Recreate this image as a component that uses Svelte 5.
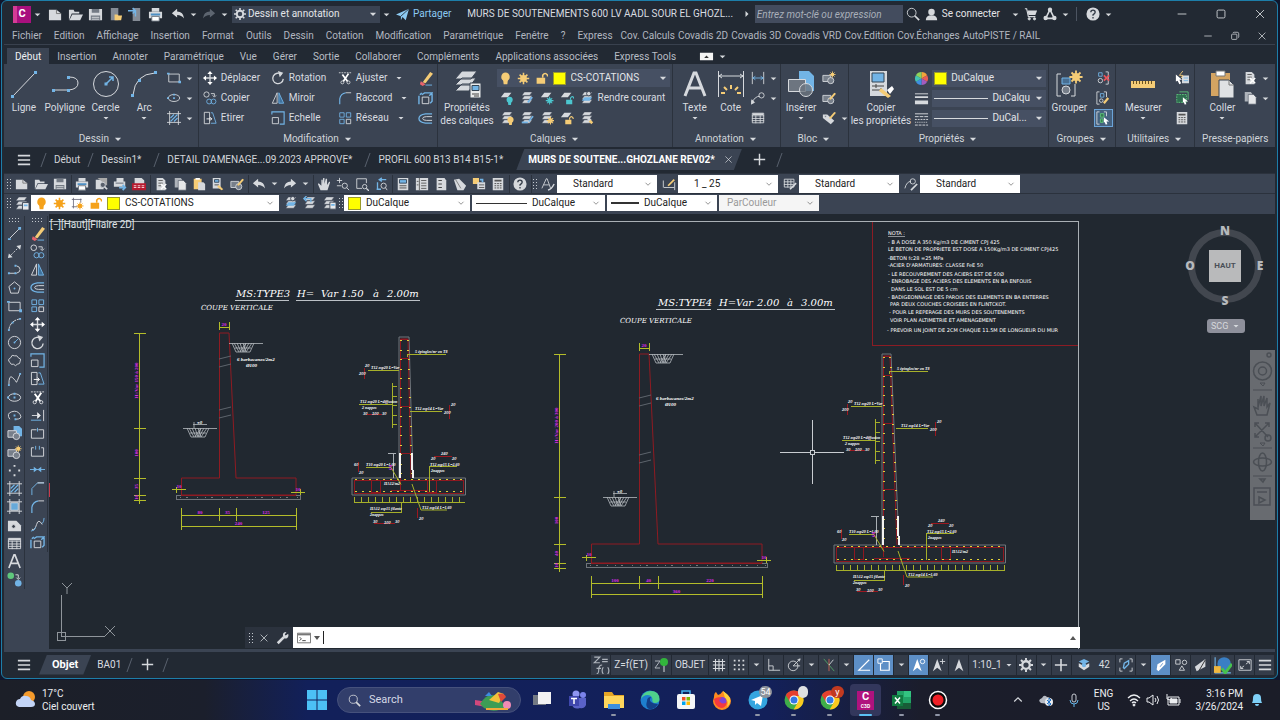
<script lang="ts">
  type Tool = [icon: string, label: string];
  type Point = [number, number];

  const W = "#d6d9dd";
  const B = "#72b4e6";
  const Y = "#f5cc76";
  const G = "#5fc77c";

  const sheets = `<path d="M5 1h9l-3 4H2zM5 5.500h9l-3 4H2z" fill="${W}" stroke="#3b4453" stroke-width=".6"/><path d="M5 10h9l-3 4H2z" fill="${W}" stroke="#3b4453" stroke-width=".6"/>`;
  const sheet = `<path d="M5 2h8l-4 5H1z" fill="${W}" stroke="none"/>`;
  const doc = `<path d="M3 1h7l3 3v11H3z" fill="${W}" stroke="none"/>`;
  const block = `<path d="M1 5h9v7H1z" fill="#777f8a"/><circle cx="10" cy="11" r="3.500" fill="#777f8a"/>`;
  const bulb = (x: number, y: number, c: string, k = 1) =>
    `<g transform="translate(${x} ${y}) scale(${k})" stroke="none"><circle r="3.500" fill="${c}"/><path d="M-2 2h4l-.5 4h-3z" fill="${c}"/></g>`;
  const sun = (x: number, y: number, r: number, c: string) =>
    `<g transform="translate(${x} ${y}) scale(${r})"><path d="M0-2.200V2.200M-2.200 0H2.200M-1.500-1.500l3 3M1.500-1.500l-3 3" stroke="${c}" stroke-width=".6"/><circle r="1.300" fill="${c}" stroke="none"/></g>`;
  const lock = (x: number, y: number, c: string, k = 1) =>
    `<g transform="translate(${x} ${y}) scale(${k})"><path d="M0 4h7v5H0z" fill="${c}" stroke="none"/><path d="M5 4V2q2-3 4 0v1" stroke="${c}" stroke-width="1.300"/></g>`;

  const icons: Record<string, string> = {
    caret: `<path d="M3 6h10l-5 5z" fill="${W}" stroke="none"/>`,
    chevron: `<path d="M4 6l4 4 4-4" stroke="#555"/>`,
    newFile: `<path d="M1 3h8l5 4v7H1z" fill="${W}" stroke="none"/><path d="M9 3v4h5" stroke="#777"/>`,
    open: `<path d="M1 14V3h5l1 2h5v2H4z" fill="${W}" stroke="none"/><path d="M4.500 8H16l-3 6H1.500z" fill="${W}" stroke="none"/>`,
    save: `<path d="M1 2h14v12H1z" fill="${W}" stroke="none"/><path d="M4 2h8v4H4zM3 9h10v5H3z" fill="#737a84" stroke="none"/><path d="M4 11h8M4 13h8" stroke="${W}"/>`,
    phoneOpen: `<path d="M3 1h8v13H3z" fill="#858c96" stroke="none"/><path d="M7 14V8h3l1 1h4l-1 5z" fill="${Y}" stroke="none"/>`,
    phoneSave: `<path d="M5 1h8v14H5z" fill="#858c96" stroke="none"/><path d="M0 4h7M5 1l3 3-3 3M8 4v6" stroke="${B}" stroke-width="1.500"/>`,
    print: `<path d="M4 1h8v4H4z" fill="${W}" stroke="none"/><path d="M1 5h14v7H1z" fill="${W}" stroke="none"/><path d="M3 8h10" stroke="#4d8fc4" stroke-width="2"/><path d="M4 10h8v5H4z" fill="#fff" stroke="#69717c"/>`,
    preview: `<path d="M2 3h9v11H2z" fill="${W}" stroke="none"/><path d="M4 1h11v9" fill="#aaa" stroke="none"/><circle cx="10" cy="9" r="3" fill="#59606c"/><path d="M12 11l3 3" stroke-width="2"/>`,
    publish: `<path d="M4 1h8v4H4zM1 5h13v6H1z" fill="${W}" stroke="none"/><path d="M3 7h9" stroke="#59606c"/><path d="M7 12h6M11 9l3 3-3 3" stroke="${B}" stroke-width="2"/>`,
    dwf: `<path d="M3 1h8l3 3v4H3z" fill="${W}" stroke="none"/><path d="M0 7h16v8H0z" fill="#b5192f" stroke="none"/><path d="M2 10h12M2 12h12" stroke="#f3c9cf" stroke-width="1.200" stroke-dasharray="3 1.500"/>`,
    undo: `<path d="M1 7l6-5v3q7 0 8 8-3-4-8-4v3z" fill="${W}" stroke="none"/>`,
    redo: `<path d="M15 7L9 2v3q-7 0-8 8 3-4 8-4v3z" fill="${W}" stroke="none"/>`,
    redoOff: `<path d="M15 7L9 2v3q-7 0-8 8 3-4 8-4v3z" fill="#5d6570" stroke="none"/>`,
    gear: `<circle cx="8" cy="8" r="4.300" stroke-width="2.600"/><path d="M8 0v3M8 13v3M0 8h3M13 8h3M2.300 2.300l2 2M11.700 11.700l2 2M13.700 2.300l-2 2M4.300 11.700l-2 2" stroke-width="2.200"/>`,
    plane: `<path d="M0 8L16 1l-4 14-4-4-2 4v-5z" fill="#8ccaf2" stroke="none"/><path d="M6 10l10-9" stroke="#222933"/>`,
    play: `<path d="M5 2l6 6-6 6z" fill="${W}" stroke="none"/>`,
    search: `<circle cx="6.500" cy="6.500" r="5"/><path d="M10 10l5 5" stroke-width="2"/>`,
    user: `<circle cx="8" cy="5" r="4" fill="${W}" stroke="none"/><path d="M1 15q0-6 7-6t7 6z" fill="${W}" stroke="none"/>`,
    cart: `<path d="M1 2h2l2 9h8" stroke-width="1.300"/><path d="M4 4h11l-2 5H5z" fill="${W}" stroke="none"/><circle cx="6" cy="13.500" r="1.300" fill="${W}"/><circle cx="12" cy="13.500" r="1.300" fill="${W}"/>`,
    apps: `<path d="M8 3L3 13h10z" stroke-width="1.800"/><circle cx="8" cy="3" r="2.500" fill="${W}" stroke="none"/><circle cx="3" cy="12.500" r="2.500" fill="${W}" stroke="none"/><circle cx="13" cy="12.500" r="2.500" fill="${W}" stroke="none"/>`,
    help: `<circle cx="8" cy="8" r="7.500" fill="${W}" stroke="none"/><path d="M5.500 6q0-2.500 2.500-2.500T10.500 6q0 1-2.500 3v1M8 11.500v1.500" stroke="#333b47" stroke-width="1.500"/>`,
    min: `<path d="M3 8h10"/>`,
    max: `<rect x="3.500" y="3.500" width="9" height="9" rx="1.500"/>`,
    restore: `<rect x="3.500" y="5.500" width="7" height="7" rx="1"/><path d="M5.500 4q0-1 1.500-1h4q2 0 2 2v4q0 1-1 1"/>`,
    close: `<path d="M3.500 3.500l9 9M12.500 3.500l-9 9"/>`,
    plus: `<path d="M8 1v14M1 8h14" stroke-width="1.800"/>`,
    menu: `<path d="M1 3h14M1 8h14M1 13h14" stroke-width="1.800"/>`,
    ribbonToggle: `<path d="M1 4h14v8H1z" fill="#f4f4f4" stroke="none"/><path d="M5.500 9.500h5L8 7z" fill="#333" stroke="none"/>`,
    line: `<path d="M3 13L13 3"/><path d="M1 13h3v2H1zM12 1h3v3h-3z" fill="${B}" stroke="none"/>`,
    ray: `<path d="M2 14L14 2" stroke-dasharray="2 1.500"/><path d="M1 15l1-5 4 4zM15 1l-1 5-4-4z" fill="${W}" stroke="none"/>`,
    pline: `<path d="M2 12h8q4-1 4-4t-4-4"/><path d="M1 11h2v2H1zM8 11h2v2H8zM8 3h2v2H8z" fill="${B}" stroke="none"/>`,
    polygon: `<path d="M8 2l6 5-2 7H4L2 7z"/><circle cx="8" cy="9" r="1" fill="${B}" stroke="none"/>`,
    rect: `<path d="M2 3.500h12v9H2z"/><path d="M0 2h3v2H0zM13 11h3v3h-3z" fill="${B}" stroke="none"/>`,
    arc: `<path d="M2 14Q3 4 14 2" stroke-dasharray="4 1"/><path d="M1 13h2v2H1zM5 5h2v2H5zM13 1h2v2h-2z" fill="${B}" stroke="none"/>`,
    circle: `<circle cx="8" cy="8" r="6.500"/><path d="M8 8l4-4" stroke="${B}"/><circle cx="8" cy="8" r="1" fill="${B}" stroke="none"/>`,
    cloud: `<path d="M3 10q-3-3 1-5 1-4 4-2 3-1 4 2 4 1 2 4 0 3-3 3-2 3-4 0-3 1-4-2z"/>`,
    spline: `<path d="M2 14Q2 2 6 6t4 5 4-9" /><path d="M1 13h2v2H1zM13 1h2v2h-2z" fill="${B}" stroke="none"/>`,
    ellipse: `<ellipse cx="8" cy="8" rx="6.500" ry="4"/><path d="M7 7h2v2H7zM0 7h2v2H0zM7 3h2v2H7z" fill="${B}" stroke="none"/>`,
    ellipseArc: `<path d="M3 12q-4-6 2-8t9 3-5 5"/><path d="M7 7h2v2H7zM8 11h2v2H8z" fill="${B}" stroke="none"/>`,
    insert: `<path d="M7 0h6l3 3v8H7z" fill="${B}" stroke="none"/>${block}`,
    block: `${block}${sun(12, 4, 1.6, Y)}`,
    blockEdit: `${block}<path d="M8 9l6-7 2 1-6 7z" fill="${Y}" stroke="none"/>`,
    tag: `<path d="M1 4h5l8 7-4 4-9-7z" fill="${W}" stroke="none"/><path d="M8 8l6-7 2 1-6 7z" fill="${Y}" stroke="none"/><circle cx="4" cy="6" r="1" fill="#3b4453"/>`,
    points: `<path d="M7 2h2v2H7zM2 7h2v2H2zM12 7h2v2h-2zM7 12h2v2H7z" fill="${W}" stroke="none"/>`,
    hatch: `<path d="M3 0v16M13 0v16M0 3h16M0 13h16"/><path d="M4 8l4-4M4 12l8-8M8 12l4-4" stroke="${B}" stroke-width="1.300"/>`,
    gradient: `<path d="M4 4h8v8H4z" fill="#67a9d9"/><path d="M3 0v16M13 0v16M0 3h16M0 13h16"/>`,
    region: `<path d="M1 3h9l5 5v6H1z" fill="${W}" stroke="none"/><circle cx="7" cy="9" r="2" fill="#333b47"/>`,
    table: `<path d="M1.500 2.500h13v11h-13zM1 5.500h14M1 8.500h14M1 11h14M5.500 5v9M10.500 5v9"/><path d="M2 3.500h12" stroke-width="2"/>`,
    text: `<path d="M2 15L7.500 1h1L14 15M4 10h8" stroke-width="1.800"/>`,
    pointStyle: `<circle cx="4" cy="4" r="3.500" fill="${G}" stroke="none"/><circle cx="12" cy="12" r="3.500" fill="${B}" stroke="none"/><path d="M9 3h3v4M10 6l2 2 2-2"/>`,
    erase: `<path d="M5 12L13 1l3 2-8 10z" fill="${Y}" stroke="none"/><path d="M3 11l5 3-3 2-3-2z" fill="#e8636c" stroke="none"/><path d="M8 15h7" stroke="${B}"/>`,
    copy: `<circle cx="4" cy="4" r="3"/><path d="M9 3h4v3M11 5l2 2 2-2"/><circle cx="7" cy="12" r="2.800" stroke="${B}"/><circle cx="12" cy="12" r="2.800" stroke="${B}"/>`,
    mirror: `<path d="M7 2v12H1.500z" /><path d="M9 2v12h5.500z" fill="#3f719c" stroke="${B}"/>`,
    offset: `<path d="M15 3H8Q1 4 1 8t7 5h7" stroke="${B}" stroke-width="1.400"/><path d="M15 6H9Q5 6 5 8t4 2h6"/>`,
    array: `<path d="M2 2h5v5H2zM9.500 2h5v5h-5zM2 9.500h5v5H2z" stroke="${B}"/><path d="M9.500 9.500h5v5h-5z"/>`,
    move: `<path d="M8 1v14M1 8h14"  stroke-width="1.500"/><path d="M8 0l3 3.500H5zM8 16l3-3.500H5zM0 8l3.500-3v6zM16 8l-3.500-3v6z" fill="#fff" stroke="none"/>`,
    rotate: `<path d="M12 4A6 6 0 1 0 14 9" stroke-width="1.500"/><path d="M8 0l6 2-4 5z" fill="${W}" stroke="none"/>`,
    scale: `<path d="M1 4V1h14v14h-5" stroke="${B}" stroke-width="1.300"/><path d="M1.500 7.500h7v7h-7z"/>`,
    stretch: `<path d="M1.500 1.500h6v13h-6z"/><path d="M9 2h2l4 12H9" stroke="${B}"/><path d="M4 9h6M8 7l2 2-2 2" stroke="#fff"/>`,
    trim: `<path d="M1 2h14" stroke-dasharray="2 1"/><path d="M5 4l6 8M12 3L6 12" stroke="#fff" stroke-width="2"/><circle cx="5" cy="13" r="1.700"/><circle cx="12" cy="13" r="1.700"/>`,
    extend: `<path d="M14.500 2v12"/><path d="M1 13h11" stroke="${B}"/><path d="M2 8h8M8 5l3 3-3 3z" fill="#fff"/>`,
    breakPt: `<path d="M7 4H1.500v9h13V4H9"/><path d="M8 2v4" stroke="${B}"/>`,
    breakGap: `<path d="M4 4H1.500v9h13V4H12"/><path d="M6 2v4M10 2v4" stroke="${B}"/>`,
    join: `<path d="M0 8h16" stroke="${B}"/><path d="M4 5l4 3-4 3zM12 5L8 8l4 3z" fill="${B}" stroke="none"/>`,
    chamfer: `<path d="M2 15V8l6-6h7" stroke="${B}"/><path d="M8 2h7"/>`,
    fillet: `<path d="M2 15V9Q3 3 9 2" stroke="${B}" stroke-width="1.300"/><path d="M9 2h6"/>`,
    blend: `<path d="M2 13q3 2 5-5 2-7 6 0" stroke="${W}"/><path d="M1 15q4 0 5-4M13 7q2-2 2-6" stroke="${B}"/>`,
    explode: `<path d="M4.500 6.500h7v7h-7z"/><path d="M1 5v9M4 4l3-2h8l-3 3M15 3v8l-2 2M2 4l2-2" stroke="${B}" stroke-width="1.500"/>`,
    layers: `${sheets}<path d="M9 7h7v8H9z" fill="#e8eaec" stroke="#3b4453"/><path d="M10.500 9h4v2h-4z" fill="${B}" stroke="none"/>`,
    bulb: bulb(8, 6, Y, 1.5),
    bulbOn: bulb(8, 6, "#f5a21b", 1.5),
    sun: sun(8, 8, 3.2, Y),
    sunOn: sun(8, 8, 3.2, "#f5a21b"),
    vpSun: `<path d="M1 3h12M3 1v13M1 12h7M12 2v5" stroke="#667"/>${sun(11, 11, 2, "#f5a21b")}`,
    unlock: lock(2, 1, Y, 1.5),
    unlockOn: lock(2, 1, "#f5a21b", 1.5),
    layOff: `${sheet}${bulb(11, 10, "#4cc6cf")}`,
    layIso: `${sheets}<path d="M14 7l-5 6" stroke="${B}" stroke-width="2"/>`,
    layFreeze: `${sheet}${sun(11, 11, 2, "#4cc6cf")}`,
    layLock: `${sheet}${lock(7, 6, "#4cc6cf")}`,
    layCur: `${sheets}<path d="M5 7h9l-3 4H2z" fill="${B}" stroke="none"/><circle cx="10" cy="3" r="2.500" fill="${W}" stroke="#3b4453"/>`,
    layOn: `${sheets}${bulb(12, 10, Y)}`,
    layUniso: `${sheets}<path d="M15 6l-5 6M2 13h7" stroke="${B}" stroke-width="1.800"/>`,
    layThaw: `${sheets}${sun(12, 11, 2, Y)}`,
    layUnlock: `${sheet}${lock(6, 6, Y)}`,
    layMatch: `${sheets}<path d="M9 8l3 3" stroke="${W}" stroke-width="3"/><path d="M11 11l3 3" stroke="${Y}" stroke-width="3"/>`,
    layPrev: `${sheets}<path d="M1 3h8v4M4 0L1 3l3 3" stroke="${B}" stroke-width="1.500"/>`,
    dimLin: `<path d="M1.500 1v14M14.500 1v14"/><path d="M2 8h12M5 6L2 8l3 2M11 6l3 2-3 2" stroke="${B}"/>`,
    leader: `<path d="M1 14q3-8 9-8"/><circle cx="12" cy="5" r="3"/><path d="M0 15l1-5 3 3z" fill="${W}"/>`,
    cut: `${doc}<path d="M5 4h5M5 7h5M5 10h3" stroke="#555"/><path d="M8 8l6 6M14 8l-6 6" stroke="#fff" stroke-width="1.500"/>`,
    copyClip: `<path d="M2 1h7l2 3v8H2z" fill="#aeb3ba" stroke="none"/><path d="M6 4h6l3 3v8H6z" fill="#e4e6e8" stroke="#3b4453" stroke-width=".6"/>`,
    paste: `<path d="M2 2h9v12H2z" fill="${Y}" stroke="none"/><path d="M4 1h5v2H4z" fill="#fff" stroke="none"/><path d="M7 6h6l2 2v7H7z" fill="${W}" stroke="none"/>`,
    match: `<path d="M2 1h9v12H2z" fill="${W}" stroke="none"/><path d="M4 3h5v3H4z" fill="${B}" stroke="#345"/><path d="M4 9h5" stroke="#444"/><path d="M9 9l5 5-2 1-5-4z" fill="${Y}" stroke="none"/>`,
    pan: `<path d="M4 15L1 8l1-1 3 3V3h1.500v5L7 1h1.500v7L10 2h1.500v7L14 5l1 1-3 9z" fill="${W}" stroke="none"/>`,
    zoomRt: `<path d="M4 1v6M1 4h6M1 10h5"/><circle cx="10" cy="10" r="3"/><path d="M12 12l3 3"/>`,
    zoomWin: `<path d="M13 7V2H2v11h6"/><circle cx="11" cy="11" r="2.500"/><path d="M13 13l3 3" stroke-width="1.500"/>`,
    zoomPrev: `<path d="M6 3h8M4 6v8M3 14h5M9 1L6 3l3 2" stroke="${B}" stroke-width="1.500"/><circle cx="11" cy="10" r="3"/><path d="M13 12l2 3"/>`,
    props: `<path d="M2 1h12v14H2z" fill="${W}" stroke="none"/><path d="M4 3h8v4H4z" fill="${B}" stroke="#345"/><path d="M4 10h8M4 12.500h8" stroke="#444"/>`,
    palette: `<path d="M1 1h14v14H1z" fill="${W}" stroke="none"/><path d="M5 1v14M7 4h6M7 7h6M7 10h6M7 13h6M2 5h2M2 9h2" stroke="#555"/>`,
    toolPal: `<path d="M3 1h9l2 3v11H3z" fill="${W}" stroke="none"/><path d="M5 4h4M5 8h4M5 12h4" stroke="#333"/>`,
    sheetSet: `<path d="M1 3l6-1 8 8-3 5H5z" fill="${W}" stroke="none"/><path d="M3 3l6 10" stroke="#777"/>`,
    markup: `<path d="M1 1h7v7H1z" fill="${Y}" stroke="none"/><path d="M6 6h9v8H6z" fill="${W}" stroke="none"/><path d="M9 3h3v3" stroke="${B}" stroke-width="2"/><path d="M8 9h6M8 12h6" stroke="#555"/>`,
    calc: `<path d="M2 1h12v14H2z" fill="${W}" stroke="none"/><path d="M4 3h8v2H4z" fill="#555" stroke="none"/><path d="M4 7.500h8M4 10h8M4 12.500h8" stroke="#444" stroke-dasharray="2 1"/>`,
    textStyle: `<path d="M1 13L6 2h1l4 11M3 9h6"/><path d="M8 15q4-1 7-7" stroke-width="1.700"/>`,
    dimStyle: `<path d="M1.500 4v8M14.500 6v9M2 12h12"/><path d="M7 10l7-7" stroke="${Y}" stroke-width="2"/>`,
    tableStyle: `<path d="M1.500 2.500h11v9h-11zM1 5.500h11M1 8.500h11M5.500 3v9M9 3v9"/><path d="M8 14l7-7" stroke-width="2"/>`,
    leaderStyle: `<path d="M1 13Q3 5 8 5"/><circle cx="10" cy="5" r="3"/><path d="M8 15l7-7" stroke-width="2"/>`,
    lweight: `<path d="M1 3h14" stroke-width="1"/><path d="M1 6.500h14" stroke-width="2"/><path d="M1 12h14" stroke-width="4"/>`,
    ltype: `<path d="M1 3h14"/><path d="M1 6h14" stroke-dasharray="4 1"/><path d="M1 9h14" stroke-dasharray="2 1"/><path d="M1 12h14" stroke-dasharray="1 1"/><path d="M1 15h14" stroke-dasharray="3 1"/>`,
    wheel: `<g stroke="none"><path d="M8 8V1a7 7 0 0 1 6 3.500z" fill="#f3a33a"/><path d="M8 8l6-3.500a7 7 0 0 1 0 7z" fill="#e85c56"/><path d="M8 8l6 3.500A7 7 0 0 1 8 15z" fill="#a45cc0"/><path d="M8 8v7a7 7 0 0 1-6-3.500z" fill="#3e8fe0"/><path d="M8 8l-6 3.500a7 7 0 0 1 0-7z" fill="#45c4b2"/><path d="M8 8L2 4.500A7 7 0 0 1 8 1z" fill="#8fd35a"/></g>`,
    ungroup: `<path d="M3 2h4v4H3z" stroke="${B}"/><circle cx="5" cy="11" r="2.500"/><path d="M11 1h3v14h-3"/><path d="M9 5l6 6M15 5l-6 6" stroke="#e8545c" stroke-width="2"/>`,
    groupEdit: `<path d="M4 1H1v14h3M9 1h3v6"/><path d="M5 3h4v4H5z" stroke="${B}"/><circle cx="6" cy="11" r="2"/><path d="M9 14l5-6" stroke="${Y}" stroke-width="2.500"/>`,
    groupSel: `<path d="M4 1H1v14h3M9 1h3v5"/><path d="M5 3h4v4H5zM5 9h3v4H5z" stroke="${G}" fill="#357a52"/><path d="M9 7l6 5h-3l1 3-2 .5-1-3-1 1z" fill="#fff" stroke="none"/>`,
    quickSel: `<path d="M8 5h8v9H8z" fill="${W}" stroke="none"/><path d="M10 8h5M10 11h5" stroke="${B}"/><path d="M1 4l7 6H5l2 4-2 1-2-4-2 1z" fill="#fff" stroke="none"/><path d="M9 0L5 5h4L7 8" stroke="${Y}"/>`,
    selAll: `<path d="M2 4h11v9H2z" fill="#2f6e50" stroke="${G}" stroke-dasharray="2 1"/><path d="M5 1h10v9" stroke="${G}"/><path d="M9 7l6 5h-3l1 3-2 .5-1-3-1 1z" fill="#fff" stroke="none"/>`,
    grid: `<path d="M4 1v14M8 1v14M12 1v14M1 4h14M1 8h14M1 12h14" stroke-width="1.200"/>`,
    dots: `<path d="M2 3h12M2 8h12M2 13h12" stroke-width="2" stroke-dasharray="2 3"/>`,
    ortho: `<path d="M2 1v13h13M2 9h5v5"/>`,
    polar: `<circle cx="7" cy="9" r="5.500"/><path d="M7 9l8-8M7 9h8M12 2l3-1-1 3"/>`,
    iso: `<path d="M2 1l12 14" stroke="#55a868"/><path d="M8 1v14" stroke="#c65"/><path d="M13 2L8 8"/>`,
    angle: `<path d="M14 2L2 14h13" stroke="#fff" stroke-width="1.300"/>`,
    osnap: `<path d="M4 4h10v10H4z" stroke="#fff" stroke-width="1.300"/><path d="M1 1h5v5H1z" fill="#5d8fc6" stroke="#fff"/>`,
    annoVis: `<path d="M6 1l5 14-5-4-5 4z" fill="#fff" stroke="none"/><circle cx="12" cy="4" r="2.500" stroke="#fff"/>`,
    annoAuto: `<path d="M6 1l5 14-5-4-5 4z" fill="${W}" stroke="none"/><path d="M12 1v6M9 4h6"/>`,
    anno: `<path d="M8 1l5 14-5-4-5 4z" fill="${W}" stroke="none"/>`,
    stack: `<path d="M8 1l6 3-6 3-6-3z" fill="${B}" stroke="none"/><path d="M2 6v4l6 4 6-4V6L8 9z" fill="${W}" stroke="none"/><circle cx="8" cy="8" r="2.500" fill="${B}" stroke="none"/>`,
    frameTag: `<path d="M4 1H1v4M12 1h3v4M4 15H1v-4M12 15h3v-4"/><path d="M5 11l1-5 5-3v4l-5 5z" stroke="${B}" stroke-width="1.500"/>`,
    tagBlue: `<path d="M3 13l1-6 9-5v5l-8 8z" fill="#fff" stroke="none"/><path d="M7 10l3-4" stroke="#5d8fc6"/>`,
    shapes: `<path d="M2 2h5v5H2zM6 14l3-5 3 5z"/><circle cx="12" cy="5" r="2.500"/>`,
    zf: `<path d="M2 1h5L2 6h5M9 3h5M9 5h5M4 16q2 0 2-4t3-4M4 11h4M10 10q-2 3 0 6M14 10q2 3 0 6" stroke="#aeb4bc"/>`,
    zPin: `<path d="M2 4h5L2 11h5" stroke="#aeb4bc"/><path d="M11 7v8"/><circle cx="11" cy="5" r="4" fill="#32b53c" stroke="none"/>`,
    gfx: `<path d="M3 15L1 10 13 1v9z" fill="${W}" stroke="none"/><path d="M6 14l7-12" stroke="#222"/>`,
    cloudOk: `<circle cx="9" cy="7" r="6" fill="#3a7fc4" stroke="none"/><path d="M1 1v14h14" stroke="${B}"/><path d="M0 9h6v6H0z" fill="#efb73e" stroke="none"/><path d="M7 11l3 4 6-8" stroke="#47c24f" stroke-width="2.500"/>`,
    full: `<path d="M1 2h14v12H1z"/><path d="M9 7l4-3M10 4h3v3M7 9l-4 3M6 12H3V9"/>`,
    wrench: `<path d="M2 14l7-7" stroke-width="3"/><path d="M14 3l-3 2-1-1 2-3q-5 0-4 5 1 4 5 2 2-2 1-5z" fill="${W}" stroke="none"/>`,
    prompt: `<path d="M.5 2.500h15v11H.5z" fill="#fff" stroke="#666"/><path d="M1 4h14" stroke="#777" stroke-width="2"/><path d="M3 7l2 2-2 2M6 11h4" stroke="#333"/>`,
    up: `<path d="M3 10l5-5 5 5" stroke-width="1.600"/>`,
  };

  // 28 x 28 icons of the large ribbon buttons
  const bigIcons: Record<string, string> = {
    line: `<path d="M3 26L25 3"/><path d="M1 25h3v3H1zM24 1h3v3h-3z" fill="${B}" stroke="none"/>`,
    pline: `<path d="M2 20h16q9-1 9-7t-9-6"/><path d="M1 19h3v3H1zM16 19h3v3h-3zM16 6h3v3h-3z" fill="${B}" stroke="none"/>`,
    circle: `<circle cx="14" cy="14" r="12.500"/><path d="M14 14l7-7M17 7h4v4" stroke="${B}" stroke-width="1.500"/><path d="M12.500 12.500h3v3h-3z" fill="${B}" stroke="none"/>`,
    arc: `<path d="M3 25Q5 4 25 3"/><path d="M1 24h3v3H1zM8 9h3v3H8zM24 1h3v3h-3z" fill="${B}" stroke="none"/>`,
    layers: `<path d="M9 1h15l-6 8H2zM9 8h14l-5 7H2zM9 14h12l-5 7H2z" fill="${W}" stroke="#3b4453"/><path d="M17 13h11v15H17z" fill="#e8eaec" stroke="#3b4453"/><path d="M19 15.500h7v5h-7z" fill="${B}" stroke="#345"/><path d="M19 24h7M21 26h5" stroke="#444"/>`,
    text: `<path d="M4 26L13 3h2l9 23M7 18h14" stroke-width="3"/>`,
    dim: `<path d="M1.500 1v26M26.500 1v26M2 6h24M5 4L2 6l3 2M23 4l3 2-3 2"/><path d="M14 15v4M7 17l3 3M21 17l-3 3M4 23h4M20 23h4" stroke="${Y}" stroke-width="2"/>`,
    insert: `<path d="M12 1h10l5 5v15H12z" fill="${B}" stroke="none"/><path d="M1.500 9.500h17v12h-17z" fill="#6d7580"/><circle cx="19" cy="20" r="6.500" fill="#6d7580" fill-opacity=".8"/>`,
    match: `<path d="M3 1h17v25H3z" fill="${W}" stroke="none"/><path d="M5 3h12v9H5z" fill="${B}" stroke="#345" /><path d="M5 16h12M5 20h9M9 14v4M14 18v4" stroke="#444"/><path d="M14 18l10 8-3 2-9-7z" fill="${Y}" stroke="none"/><path d="M20 20l5-4 2 3-4 5z" fill="#fff" stroke="none"/>`,
    group: `<path d="M6 4H2v22h4M16 26h4V14" /><path d="M7 8h8v6H7z" fill="#486f93" stroke="${B}"/><circle cx="11" cy="20" r="4" fill="#777f8a"/>${sun(21, 7, 3, Y)}`,
    measure: `<path d="M2 11h24v7H2z" fill="${Y}" stroke="none"/><path d="M4.500 11v3M7.500 11v3M10.500 11v3M13.500 11v3M16.500 11v3M19.500 11v3M22.500 11v3" stroke="#6b5320"/>`,
    paste: `<path d="M3 3h19v23H3z" fill="#d4a462" stroke="none"/><path d="M8 1h9v5H8z" fill="#fff" stroke="#777"/><path d="M11 10h10l5 5v13H11z" fill="#dfe1e4" stroke="#3b4453"/><path d="M21 10v5h5" stroke="#777"/>`,
  };

  const quickAccess: Tool[] = [
    ["newFile", "Nouveau"], ["open", "Ouvrir"], ["save", "Enregistrer"],
    ["phoneOpen", "Ouvrir depuis mobile"], ["phoneSave", "Enregistrer sur mobile"], ["print", "Tracer"],
  ];
  const menus = ["Fichier", "Edition", "Affichage", "Insertion", "Format", "Outils", "Dessin", "Cotation", "Modification", "Paramétrique", "Fenêtre", "?", "Express"];
  const covadisMenus = ["Cov. Calculs", "Covadis 2D", "Covadis 3D", "Covadis VRD", "Cov.Edition", "Cov.Échanges", "AutoPISTE / RAIL"];
  const ribbonTabs = ["Début", "Insertion", "Annoter", "Paramétrique", "Vue", "Gérer", "Sortie", "Collaborer", "Compléments", "Applications associées", "Express Tools"];

  const modify: [string, string, boolean][] = [
    ["move", "Déplacer", false], ["rotate", "Rotation", false], ["trim", "Ajuster", true],
    ["copy", "Copier", false], ["mirror", "Miroir", false], ["fillet", "Raccord", true],
    ["stretch", "Etirer", false], ["scale", "Echelle", false], ["array", "Réseau", true],
  ];
  const modifyExtra: Tool[] = [["erase", "Effacer"], ["explode", "Décomposer"], ["offset", "Décaler"]];
  const layerTools: Tool[] = [
    ["layOff", "Inactif"], ["layIso", "Isoler"], ["layFreeze", "Geler"], ["layLock", "Verrouiller"],
  ];
  const layerTools2: Tool[] = [
    ["layOn", "Activer tout"], ["layUniso", "Désisoler"], ["layThaw", "Libérer tout"], ["layUnlock", "Déverrouiller"], ["layMatch", "Faire correspondre"],
  ];

  const standardBar: Tool[][] = [
    [["newFile", "Nouveau"], ["open", "Ouvrir"], ["save", "Enregistrer"]],
    [["print", "Tracer"], ["preview", "Aperçu"], ["publish", "Publier"], ["dwf", "DWF"]],
    [["cut", "Couper"], ["copyClip", "Copier"], ["paste", "Coller"], ["match", "Copier les propriétés"], ["blockEdit", "Editeur de blocs"]],
  ];
  const standardBar2: Tool[][] = [
    [["pan", "Panoramique"], ["zoomRt", "Zoom"], ["zoomWin", "Zoom fenêtre"], ["zoomPrev", "Zoom précédent"]],
    [["props", "Propriétés"], ["palette", "DesignCenter"], ["toolPal", "Palettes d'outils"], ["sheetSet", "Jeu de feuilles"], ["markup", "Annotations"], ["calc", "Calculatrice"]],
    [["help", "Aide"]],
  ];
  const styleSelects: [string, string, string][] = [
    ["textStyle", "Style de texte", "Standard"], ["dimStyle", "Style de cote", "1 _ 25"],
    ["tableStyle", "Style de tableau", "Standard"], ["leaderStyle", "Style de ligne de repère", "Standard"],
  ];

  const drawTools = ["line", "ray", "pline", "polygon", "rect", "arc", "circle", "cloud", "spline", "ellipse", "ellipseArc", "insert", "block", "points", "hatch", "gradient", "region", "table", "text", "pointStyle"];
  const editTools = ["erase", "copy", "mirror", "offset", "array", "move", "rotate", "scale", "stretch", "trim", "extend", "breakPt", "breakGap", "join", "chamfer", "fillet", "blend", "explode"];

  const notes: [number, number, string][] = [
    [888, 244, "- B A DOSE A 350 Kg/m3 DE CIMENT CPJ 425"],
    [888, 251, "LE BETON DE PROPRIETE EST DOSE A 150Kg/m3 DE CIMENT CPJ425"],
    [888, 260, "-BETON fc28 =25 MPa"],
    [888, 267, "-ACIER D'ARMATURES: CLASSE FeE 50"],
    [888, 276, "- LE RECOUVREMENT DES ACIERS EST DE 50Ø"],
    [888, 283, "- ENROBAGE DES ACIERS DES ELEMENTS EN BA ENFOUIS"],
    [891, 291, "DANS LE SOL EST DE 5 cm"],
    [888, 299, "- BADIGEONNAGE DES PAROIS DES ELEMENTS EN BA ENTERRES"],
    [890, 306, "PAR  DEUX COUCHES CROISEES  EN FLINTCKOT."],
    [889, 314, "- POUR LE REPERAGE DES MURS DES SOUTENEMENTS"],
    [890, 322, "VOIR PLAN ALTIMETRIE ET AMENAGEMENT"],
    [887, 332, "- PREVOIR UN JOINT DE 2CM CHAQUE 11.5M DE LONGUEUR DU MUR"],
  ];

  // formwork sections of the two wall types
  const walls = [
    {
      left: 219, right: 229, heel: 236, top: 333, foot: 478, base: 495, x0: 181, x1: 296,
      dimX: 139, levels: [333, 428, 478, 495, 500], heights: ["H=Var 150 à 200", "100", "35", "10"],
      spans: [181, 219, 236, 296], widths: ["80", "35", "125"], total: "240", dimY: 515,
      earth: 343, water: 428, note: [237, 361] as Point, drains: [359, 367, 410, 418], blind: [176, 300],
    },
    {
      left: 639, right: 649, heel: 658, top: 354, foot: 544, base: 563, x0: 591, x1: 762,
      dimX: 559, levels: [354, 497, 544, 563, 568], heights: ["H=Var 200 à 300", "100", "40", "10"],
      spans: [591, 639, 658, 762], widths: ["100", "40", "220"], total: "360", dimY: 583,
      earth: 354, water: 497, note: [656, 400] as Point, drains: [398, 406, 455, 463], blind: [586, 767],
    },
  ];

  // reinforcement sections
  const rebars = [
    { l: 399, r: 409, heel: 413, top: 337, foot: 478, base: 495, x0: 352, x1: 465, lap: 453, rungs: [339, 358, 406, 453], comb: 383, stirrups: [371, 427], inner: [384, 485] as Point, front: 370, back: 411, up: 429 },
    { l: 882, r: 891, heel: 899, top: 354, foot: 545, base: 563, x0: 834, x1: 1005, lap: 516, rungs: [356, 375, 423, 489], comb: 419, stirrups: [854, 941], inner: [952, 553] as Point, front: 406, back: 428, up: 926 },
  ];

  function steps(from: number, to: number, step: number) {
    const out: number[] = [];
    for (let v = from; v <= to; v += step) out.push(v);
    return out;
  }

  const hatchEarth = (x: number, y: number) =>
    `M${x} ${y}l4 9h14l4-9M${x + 2} ${y}l5 9M${x + 5} ${y}l4 9M${x + 8} ${y}l3 9 3-9M${x + 11} ${y}l3 9M${x + 20} ${y}l-6 9M${x + 17} ${y}l-5 9M${x + 14} ${y}l-6 9M${x + 3} ${y + 5}h16`;

  const status: [string, string, boolean][] = [
    ["grid", "Grille", false], ["dots", "Résolution", false], ["caret", "Options de résolution", false],
    ["ortho", "Ortho", false], ["polar", "Repérage polaire", false], ["caret", "Options polaires", false],
    ["iso", "Isométrique", false], ["caret", "Options isométriques", false],
    ["angle", "Repérage d'accrochage", true], ["osnap", "Accrochage aux objets", true], ["caret", "Options d'accrochage", false],
    ["annoVis", "Visibilité des annotations", true], ["annoAuto", "Echelle automatique", false], ["anno", "Echelle d'annotation", false],
  ];

  let activeTab = $state("Début");
  let command = $state("");
</script>

{#snippet icon(name: string, size = 14)}
  <svg class="icon" width={size} height={size} viewBox="0 0 16 16" fill="none" stroke={W} aria-hidden="true">{@html icons[name]}</svg>
{/snippet}

{#snippet tool(name: string, label: string, size = 14)}
  <button type="button" class={["tool", name === "caret" && "narrow"]} aria-label={label}>{@render icon(name, name === "caret" ? 9 : size)}</button>
{/snippet}

{#snippet big(name: string, label: string, caret = false, second = "")}
  <button type="button" class="big">
    <svg width="28" height="28" viewBox="0 0 28 28" fill="none" stroke={W} aria-hidden="true">{@html bigIcons[name]}</svg>
    <span>{label}</span>
    {#if second}<span>{second}</span>{/if}
    {#if caret}{@render icon("caret", 8)}{/if}
  </button>
{/snippet}

{#snippet combo(label: string, value: string, kind = "light")}
  <select class={["combo", kind]} aria-label={label} disabled={kind === "light" && value === "ParCouleur"}>
    <option>{value}</option>
  </select>
  {@render icon(kind === "light" ? "chevron" : "caret", 10)}
{/snippet}

{#snippet label(x: number, y: number, text: string, large = false)}
  <text class={["anno", large && "large"]} {x} {y}>{text}</text>
{/snippet}

<div class="desktop">
  <div class="window">
    <header class="titlebar">
      <button type="button" class="logo" aria-label="Menu de l'application">C</button>
      {@render tool("caret", "Menu")}
      <div class="quick">
        {#each quickAccess as [name, text]}{@render tool(name, text, 15)}{/each}
      </div>
      {@render tool("undo", "Annuler")}
      {@render tool("caret", "Historique")}
      {@render tool("redoOff", "Rétablir")}
      {@render tool("caret", "Historique de rétablissement")}
      <div class="field workspace">{@render icon("gear", 12)}{@render combo("Espace de travail", "Dessin et annotation", "dark")}</div>
      {@render tool("caret", "Personnaliser")}
      <button type="button" class="share">{@render icon("plane", 13)}Partager</button>
      <h1>MURS DE SOUTENEMENTS 600 LV AADL SOUR EL GHOZL...</h1>
      {@render icon("play", 8)}
      <input class="find" type="search" placeholder="Entrez mot-clé ou expression" aria-label="Rechercher" />
      {@render tool("search", "Rechercher")}
      <button type="button" class="login">{@render icon("user", 13)}Se connecter</button>
      {@render tool("caret", "Compte")}
      {@render tool("cart", "Boutique")}
      {@render tool("apps", "Applications")}
      {@render tool("caret", "Plus d'applications")}
      <span class="rule"></span>
      {@render tool("help", "Aide")}
      {@render tool("caret", "Plus d'aide")}
      <div class="winbtns">
        {@render tool("min", "Réduire")}{@render tool("max", "Agrandir")}{@render tool("close", "Fermer")}
      </div>
    </header>

    <nav class="menubar" aria-label="Menus">
      {#each menus as item}<button type="button">{item}</button>{/each}
      <div class="covadis">
        {#each covadisMenus as item}<button type="button">{item}</button>{/each}
      </div>
      <div class="docbtns">
        {@render tool("min", "Réduire le dessin", 12)}{@render tool("restore", "Restaurer le dessin", 12)}{@render tool("close", "Fermer le dessin", 12)}
      </div>
    </nav>

    <nav class="ribbon-tabs" aria-label="Ruban">
      {#each ribbonTabs as tab}
        <button type="button" class={{ active: activeTab === tab }} onclick={() => (activeTab = tab)}>{tab}</button>
      {/each}
      <div class="toggle">{@render icon("ribbonToggle", 15)}{@render icon("caret", 9)}</div>
    </nav>

    <div class="ribbon">
      <section class="panel draw">
        <div class="body">
          {@render big("line", "Ligne")}
          {@render big("pline", "Polyligne")}
          {@render big("circle", "Cercle", true)}
          {@render big("arc", "Arc", true)}
          <div class="stack">
            {#each [["rect", "Rectangle"], ["ellipse", "Ellipse"], ["hatch", "Hachures"]] as [name, text]}
              <div class="pair">{@render tool(name, text)}{@render tool("caret", `Options ${text}`)}</div>
            {/each}
          </div>
        </div>
        <button type="button" class="foot">Dessin {@render icon("caret", 10)}</button>
      </section>

      <section class="panel modify">
        <div class="body">
          <div class="modify-grid">
            {#each modify as [name, text, more]}
              <button type="button" class="row">{@render icon(name, 14)}<span>{text}</span>{#if more}{@render icon("caret", 8)}{/if}</button>
            {/each}
          </div>
          <div class="stack">
            {#each modifyExtra as [name, text]}<div class="pair">{@render tool(name, text, 15)}</div>{/each}
          </div>
        </div>
        <button type="button" class="foot">Modification {@render icon("caret", 10)}</button>
      </section>

      <section class="panel layers">
        <div class="body">
          {@render big("layers", "Propriétés", false, "des calques")}
          <div class="stack wide">
            <div class="field tall">
              {@render icon("bulb", 13)}{@render icon("sun", 13)}{@render icon("unlock", 13)}<i class="swatch"></i>
              {@render combo("Calque", "CS-COTATIONS", "dark")}
            </div>
            <div class="pair">
              {#each layerTools as [name, text]}{@render tool(name, text)}{/each}
              <button type="button" class="row current-layer">{@render icon("layCur", 14)}<span>Rendre courant</span></button>
            </div>
            <div class="pair">{#each layerTools2 as [name, text]}{@render tool(name, text)}{/each}</div>
          </div>
        </div>
        <button type="button" class="foot">Calques {@render icon("caret", 10)}</button>
      </section>

      <section class="panel annotate">
        <div class="body">
          {@render big("text", "Texte", true)}
          {@render big("dim", "Cote")}
          <div class="stack">
            <div class="pair">{@render tool("dimLin", "Cote linéaire")}{@render tool("caret", "Options de cote")}</div>
            <div class="pair">{@render tool("leader", "Ligne de repère")}{@render tool("caret", "Options de repère")}</div>
            <div class="pair">{@render tool("table", "Tableau")}</div>
          </div>
        </div>
        <button type="button" class="foot">Annotation {@render icon("caret", 10)}</button>
      </section>

      <section class="panel blocks">
        <div class="body">
          {@render big("insert", "Insérer", true)}
          <div class="stack">
            <div class="pair">{@render tool("block", "Créer un bloc")}</div>
            <div class="pair">{@render tool("blockEdit", "Modifier un bloc")}</div>
            <div class="pair">{@render tool("tag", "Attributs")}{@render tool("caret", "Options d'attributs")}</div>
          </div>
        </div>
        <button type="button" class="foot">Bloc {@render icon("caret", 10)}</button>
      </section>

      <section class="panel props">
        <div class="body">
          {@render big("match", "Copier", false, "les propriétés")}
          <div class="stack wide">
            <div class="pair">{@render icon("wheel", 15)}<div class="field"><i class="swatch"></i>{@render combo("Couleur", "DuCalque", "dark")}</div></div>
            <div class="pair">{@render icon("lweight", 15)}<div class="field"><i class="stroke"></i>{@render combo("Epaisseur", "DuCalque", "dark")}</div></div>
            <div class="pair">{@render icon("ltype", 15)}<div class="field"><i class="stroke"></i>{@render combo("Type de ligne", "DuCal...", "dark")}</div></div>
          </div>
        </div>
        <button type="button" class="foot">Propriétés {@render icon("caret", 10)}</button>
      </section>

      <section class="panel groups">
        <div class="body">
          {@render big("group", "Grouper")}
          <div class="stack">
            <div class="pair">{@render tool("ungroup", "Dissocier")}</div>
            <div class="pair">{@render tool("groupEdit", "Modifier le groupe")}</div>
            <div class="pair pressed">{@render tool("groupSel", "Sélection de groupe")}</div>
          </div>
        </div>
        <button type="button" class="foot">Groupes {@render icon("caret", 10)}</button>
      </section>

      <section class="panel utils">
        <div class="body">
          {@render big("measure", "Mesurer", true)}
          <div class="stack">
            <div class="pair">{@render tool("quickSel", "Sélection rapide")}</div>
            <div class="pair">{@render tool("selAll", "Tout sélectionner")}</div>
            <div class="pair">{@render tool("calc", "Calculatrice")}</div>
          </div>
        </div>
        <button type="button" class="foot">Utilitaires {@render icon("caret", 10)}</button>
      </section>

      <section class="panel clip">
        <div class="body">
          {@render big("paste", "Coller", true)}
          <div class="stack">
            <div class="pair">{@render tool("cut", "Couper")}{@render tool("caret", "Options couper")}</div>
            <div class="pair">{@render tool("copyClip", "Copier")}{@render tool("caret", "Options copier")}</div>
          </div>
        </div>
        <button type="button" class="foot">Presse-papiers</button>
      </section>
    </div>

    <nav class="files" aria-label="Dessins ouverts">
      {@render tool("menu", "Liste des dessins")}
      <span class="slash"></span><button type="button">Début</button>
      <span class="slash"></span><button type="button" class="padded">Dessin1*</button>
      <span class="slash"></span><button type="button" class="padded">DETAIL D'AMENAGE...09.2023 APPROVE*</button>
      <span class="slash"></span><button type="button" class="padded">PROFIL 600 B13 B14 B15-1*</button>
      <div class="current"><button type="button">MURS DE SOUTENE...GHOZLANE REV02*</button>{@render tool("close", "Fermer l'onglet", 11)}</div>
      {@render tool("plus", "Nouveau dessin", 13)}
      <span class="slash"></span>
    </nav>

    <div class="toolbar">
      <i class="grip"></i>
      {#each standardBar as group}
        <div class="group">{#each group as [name, text]}{@render tool(name, text)}{/each}</div>
      {/each}
      <div class="group">
        {@render tool("undo", "Annuler")}{@render tool("caret", "Liste annuler")}{@render tool("redo", "Rétablir")}{@render tool("caret", "Liste rétablir")}
      </div>
      {#each standardBar2 as group}
        <div class="group">{#each group as [name, text]}{@render tool(name, text)}{/each}</div>
      {/each}
      <i class="grip"></i>
      {#each styleSelects as [name, text, value]}
        {@render tool(name, text)}
        <div class="white style">{@render combo(text, value)}</div>
      {/each}
    </div>

    <div class="toolbar second">
      <i class="grip"></i>
      {@render tool("layers", "Gestionnaire des calques", 15)}
      <div class="white layer">
        {@render icon("bulbOn", 13)}{@render icon("sunOn", 13)}{@render icon("vpSun", 13)}{@render icon("unlockOn", 13)}<i class="swatch"></i>
        {@render combo("Calque courant", "CS-COTATIONS")}
      </div>
      {@render tool("layCur", "Rendre courant")}{@render tool("layPrev", "Calque précédent")}{@render tool("layers", "Etats de calques")}
      <i class="grip"></i>
      <div class="white colour"><i class="swatch"></i>{@render combo("Couleur", "DuCalque")}</div>
      <div class="white ltype"><i class="stroke"></i>{@render combo("Type de ligne", "DuCalque")}</div>
      <div class="white lweight"><i class="stroke bold"></i>{@render combo("Epaisseur de ligne", "DuCalque")}</div>
      <div class="white plot">{@render combo("Style de tracé", "ParCouleur")}</div>
    </div>

    <main class="work">
      <aside class="side" aria-label="Outils">
        <div class="column draw-tools">
          <i class="grip flat"></i>
          {#each drawTools as name}{@render tool(name, name, 15)}{/each}
        </div>
        <div class="column edit-tools">
          <i class="grip flat"></i>
          {#each editTools as name}{@render tool(name, name, 15)}{/each}
        </div>
      </aside>

      <div class="canvas">
        <svg class="drawing" role="img" aria-label="Coupes verticales des murs de soutènement">
          <g transform="translate(-49 -214)" fill="none" shape-rendering="crispEdges">
            <path d="M49 221.500H1078.500V649" stroke="#aab0b5" />
            <path d="M872.500 222V345.500H1078" stroke="#8c1c24" />
            <path d="M49.500 483V497" stroke="#c9394a" />

            {#each walls as w}
              {@const ys = w.levels}
              <g stroke="#8f1b22">
                <path shape-rendering="geometricPrecision" d="M{w.left + .5} {w.top}H{w.right}L{w.heel} {w.foot}H{w.x1}V{w.base}H{w.x0 + .5}V{w.foot}H{w.left + .5}Z" />
              </g>
              <rect x={w.blind[0] + .5} y={w.base + .5} width={w.blind[1] - w.blind[0]} height="4" stroke="#70757b" />
              <path d="M{w.blind[0] + 4} {w.base + 2.5}H{w.blind[1]}" stroke="#777" stroke-dasharray="1 5 2 9 1 7" />
              <path d="M{w.x0} {w.base + .5}H{w.x1}" stroke="#8f1b22" />
              <g stroke="#b4bd2a">
                <path d="M{w.dimX + .5} {w.top}V{ys[4] + 4}" />
                {#each ys as y}<path d="M{w.dimX - 5} {y + .5}h12" />{/each}
                <path d="M{w.left + .5} {w.top - 11}v8M{w.right + .5} {w.top - 11}v8M{w.left} {w.top - 5.5}H{w.right}" />
                <path d="M{w.x0} {w.dimY + .5}H{w.x1}M{w.x0} {w.dimY + 11.5}H{w.x1}" />
                {#each w.spans as x}<path d="M{x + .5} {w.dimY - 7}v13" />{/each}
                <path d="M{w.x0 + .5} {w.dimY}v15M{w.x1 + .5} {w.dimY}v15" />
                <path d="M{w.x0 - 9} {w.base - 5.5}h14M{w.x0 - 4.5} {w.base - 8}v6M{w.x1 - 5} {w.base - 2.5}h14M{w.x1 + 4.5} {w.base - 6}v6" />
              </g>
              <g class="dims" text-anchor="middle">
                {#each w.heights as h, i}
                  <text transform="translate({w.dimX - 1} {(ys[i] + ys[i + 1]) / 2}) rotate(-90)">{h}</text>
                {/each}
                {#each w.widths as s, i}<text x={(w.spans[i] + w.spans[i + 1]) / 2} y={w.dimY - 1}>{s}</text>{/each}
                <text x={(w.x0 + w.x1) / 2} y={w.dimY + 10}>{w.total}</text>
                <text x={w.left + 5} y={w.top - 7}>20</text>
                <text x={w.x0 - 2} y={w.base - 7}>10</text>
                <text x={w.x1 + 2} y={w.base - 4}>10</text>
              </g>
              <g stroke="#5d646c" shape-rendering="geometricPrecision">
                {#each w.drains as y}<path d="M{w.left} {y}l12-3" />{/each}
              </g>
              <g stroke="#b4b9be" shape-rendering="geometricPrecision">
                <path d="M{w.right} {w.earth + .5}h34M{w.left - 36} {w.water + .5}h34M{w.left - 26} {w.water - 3.5}h14M{w.left - 25} {w.water - 6}v6" stroke-width=".8" />
                <path d={hatchEarth(w.right + 3, w.earth)} stroke-width=".8" />
                <path d={hatchEarth(w.left - 32, w.water)} stroke-width=".8" />
              </g>
              {@render label(w.note[0], w.note[1], "6 barbacanes/2m2", true)}
              {@render label(w.note[0] + 9, w.note[1] + 6, "Ø100", true)}
              {@render label(w.left - 22, w.water - 4, "±0", true)}
            {/each}

            {#each rebars as s}
              <g stroke="#70757b" shape-rendering="geometricPrecision">
                <path d="M{s.l} {s.foot}V{s.top}H{s.r}L{s.heel} {s.foot}H{s.x1 + .5}V{s.base}H{s.x0}V{s.foot}Z" />
              </g>
              <g stroke="#8f1820">
                <path shape-rendering="geometricPrecision" d="M{s.l + 1.5} {s.foot}V{s.top + 2}H{s.r - 1}L{s.heel - 2} {s.foot}" />
                {#each s.rungs as y}<path d="M{s.l + 1} {y + .5}h{8 + (y - s.top) / 40}" />{/each}
                <path d="M{s.x0 + 2.5} {s.foot + 2.5}H{s.x1 - 2}V{s.base - 2}H{s.x0 + 2.5}Z" />
                {#each s.stirrups as x}<path d="M{x + .5} {s.foot + 2}h9v12h-9z" />{/each}
                <path d="M{s.l - 8} {s.base - 5}h36M{s.l + 1.5} {s.foot}v12" />
              </g>
              <g fill="#e3d33a">
                {#each steps(s.top + 3, s.foot - 4, 9.5) as y}
                  <rect x={s.l + 1} y={Math.round(y)} width="2" height="1" />
                  <rect x={Math.round(s.r - 2 + ((s.heel - s.r) * (y - s.top)) / (s.foot - s.top))} y={Math.round(y)} width="2" height="1" />
                {/each}
                {#each steps(s.x0 + 3, s.x1 - 2, 7) as x}
                  <rect {x} y={s.foot + 1} width="2" height="1" /><rect {x} y={s.base - 4} width="2" height="1" />
                {/each}
              </g>
              <g stroke="#f2f2f2" stroke-width="2">
                <path d="M{s.l + 1} {s.lap}V{s.foot}M{s.heel - 1.5} {s.lap}L{s.heel} {s.foot}" />
              </g>
              <path d="M{s.l - 5.5} {s.lap}V{s.foot}M{s.l - 11} {s.lap + .5}h8" stroke="#aab0b5" />
              <g stroke="#a6b02a">
                <path d="M{s.x0 + 2} {s.base + 7.5}H{s.x1}" />
                {#each steps(s.x0 + 2, s.x1, 7) as x}<path d="M{x + .5} {s.base + 2}v6" />{/each}
                <path d="M{s.l - 6.5} {s.comb}v45" />
                {#each [3, 13, 22, 32, 41] as dy}<path d="M{s.l - 6} {s.comb + dy + .5}h4" />{/each}
                <path d="M{s.r - 2} {s.top + 20}v-2.500h39M{s.l - 31} {s.front + .5}h31M{s.l - 40} {s.comb + 21.5}h34M{s.heel - 3} {s.back + .5}h32" />
                <path shape-rendering="geometricPrecision" d="M{s.l - 33} {s.foot - 10.5}h25l10 17M{s.heel - 1} {s.foot + 6}l9 26h26" />
                <path d="M{s.up + .5} {s.base - 3}V{s.foot - 11.5}h27M{s.l + 2.5} {s.base + 8}v9h-31" />
              </g>
              {@render label(s.r + 6, s.top + 16, "5 épingles/m² en T8")}
              {@render label(s.l - 28, s.front - 1, "T12 esp20 L=Var")}
              {@render label(s.l - 39, s.comb + 20, "T12 esp20 L=diffusion")}
              {@render label(s.l - 37, s.comb + 26, "2 nappes")}
              {@render label(s.heel + 2, s.back - 1, "T12 esp14 L=Var")}
              {@render label(s.l - 33, s.foot - 12, "T10 esp20 L=1.00")}
              {@render label(s.up + 1, s.foot - 12, "T12 esp15 L=2.60")}
              {@render label(s.up + 2, s.foot - 6, "2nappes")}
              {@render label(s.inner[0], s.inner[1], "HA12/m2")}
              {@render label(s.l - 29, s.base + 15, "HA12 esp15 filante")}
              {@render label(s.l - 29, s.base + 21, "2nappes")}
              {@render label(s.heel + 9, s.foot + 31, "T12 esp14 L=1.60")}
              <text class="dims" transform="translate({s.l - 7} {s.foot - 8}) rotate(-90)">60</text>
              <g stroke="#9c1820">
                <path d="M{s.l - 34.5} {s.front - 2}v11M{s.l - 33} {s.comb + 31.5}h16M{s.heel + 36.5} {s.back - 6}v14M{s.l - 40.5} {s.foot - 16}v10M{s.up + 5} {s.foot - 21.5}h18M{s.l - 25} {s.base + 28.5}h21M{s.heel + 4.5} {s.foot + 30}v10" />
              </g>
              <g class="tiny">
                <text x={s.l - 34} y={s.front - 3}>20</text><text x={s.l - 40} y={s.front + 5}>200</text>
                <text x={s.l - 36} y={s.comb + 32}>30</text><text x={s.l - 27} y={s.comb + 32}>100</text><text x={s.l - 17} y={s.comb + 32}>30</text>
                <text x={s.l - 45} y={s.foot - 12}>60</text><text x={s.l - 40} y={s.foot - 4}>20</text>
                <text x={s.up + 2} y={s.foot - 18}>20</text><text x={s.up + 12} y={s.foot - 23}>240</text><text x={s.up + 23} y={s.foot - 18}>20</text>
                <text x={s.l - 26} y={s.base + 28}>30</text><text x={s.l - 15} y={s.base + 29}>100</text><text x={s.l - 4} y={s.base + 28}>30</text>
                <text x={s.heel + 6} y={s.foot + 42}>20</text><text x={s.heel + 38} y={s.back - 5}>20</text><text x={s.heel + 31} y={s.back + 3}>200</text>
              </g>
            {/each}

            <g class="title">
              <text x="236" y="297">MS:TYPE3</text><text x="297" y="297">H=</text><text x="321" y="297">Var 1.50</text><text x="373" y="297">à</text><text x="387" y="297">2.00m</text>
              <text x="658" y="306">MS:TYPE4</text><text x="719" y="306">H=Var</text><text x="757" y="306">2.00</text><text x="787" y="306">à</text><text x="801" y="306">3.00m</text>
            </g>
            <path d="M235 300.500h54M296 300.500h124M656 309.500h55M717 309.500h118" stroke="#bcc1c6" />
            <g class="subtitle">
              <text x="201" y="310">COUPE VERTICALE</text>
              <text x="620" y="323">COUPE VERTICALE</text>
            </g>

            <g class="nota">
              <text x="888" y="235" text-decoration="underline">NOTA :</text>
              {#each notes as [x, y, text]}<text {x} {y}>{text}</text>{/each}
            </g>

            <path d="M780 452.500h30M815 452.500h29M812.500 420v30M812.500 455v29M810.500 450.500h4v4h-4z" stroke="#c9cdd1" />
            <path d="M61.500 595v41M61 636.500h44M57.500 632.500h8v8h-8z" stroke="#8f959b" />
            <path d="M62 583l5 5 5-5M67 588v6M105 626l10 10M115 626l-10 10" stroke="#8f959b" shape-rendering="geometricPrecision" />
          </g>
        </svg>

        <div class="view-label">[−][Haut][Filaire 2D]</div>

        <div class="cube">
          <b class="n">N</b><b class="w">O</b><button type="button">HAUT</button><b class="e">E</b><b class="s">S</b>
        </div>
        <button type="button" class="ucs">SCG {@render icon("caret", 8)}</button>

        <div class="navbar">
          <svg width="25" height="170" viewBox="0 0 25 170" fill="none" stroke="#4b4f55" stroke-width="1.500" aria-hidden="true">
            <circle cx="19" cy="5" r="2" /><circle cx="12.500" cy="21" r="9" /><circle cx="12.500" cy="21" r="4" />
            <path d="M7 65l-3-8 4 2V49v8l3-11v10l3-10v10l3-8v9l3-4-3 12z" />
            <path d="M5 73l13 14M19 73L5 87M5 77v-4h4M15 73h4v4M9 87H5v-4" /><circle cx="18" cy="88" r="3" />
            <ellipse cx="12.500" cy="112" rx="9" ry="4" /><ellipse cx="12.500" cy="112" rx="4" ry="9" />
            <path d="M4 138h16v17H4zM7 142h10M9 147l6 3-6 3zM10 129h5l-2 3z" />
            <path d="M10 33h5l-2 3zM10 93h5l-2 3zM3 98h19M3 40h19M3 126h19" stroke-width="1" />
          </svg>
        </div>

        <div class="command">
          <i class="grip"></i>
          {@render tool("close", "Fermer la ligne de commande", 12)}
          {@render tool("wrench", "Personnaliser")}
          <div class="entry">
            {@render icon("prompt", 14)}<i class="down"></i>
            <i class="cursor"></i><input aria-label="Commande" bind:value={command} />
            <i class="rise"></i>
          </div>
        </div>
      </div>
    </main>

    <footer class="statusbar">
      {@render tool("menu", "Présentations")}
      <button type="button" class="model">Objet</button>
      <button type="button" class="layout">BA01</button>
      <span class="slash"></span>{@render tool("plus", "Nouvelle présentation", 13)}<span class="slash"></span>
      <div class="modes">
        <span class="cell">{@render tool("zf", "Z", 18)}</span>
        <button type="button" class="cell word">Z=f(ET)</button>
        <span class="cell">{@render tool("zPin", "Z ponctuel", 16)}</span>
        <button type="button" class="cell word">OBJET</button>
        {#each status as [name, text, on]}
          <span class={["cell", on && "on", name === "caret" && "thin"]}>{@render tool(name, text)}</span>
        {/each}
        <button type="button" class="cell word">1:10_1 {@render icon("caret", 8)}</button>
        <span class="cell">{@render tool("gear", "Espace de travail")}</span>
        <span class="cell thin">{@render tool("caret", "Choisir l'espace")}</span>
        <span class="cell">{@render tool("plus", "Moniteur d'annotation")}</span>
        <button type="button" class="cell word count">{@render icon("stack", 14)}42</button>
        <span class="cell">{@render tool("frameTag", "Isoler")}</span>
        <span class="cell thin">{@render tool("caret", "Options d'isolement")}</span>
        <span class="cell on">{@render tool("tagBlue", "Propriétés rapides")}</span>
        <span class="cell">{@render tool("shapes", "Sélection")}</span>
        <span class="cell">{@render tool("gfx", "Performances")}</span>
        <span class="cell sync">{@render tool("cloudOk", "Synchronisation", 18)}</span>
        <span class="cell">{@render tool("full", "Plein écran")}</span>
        <span class="cell">{@render tool("menu", "Personnalisation")}</span>
      </div>
    </footer>
  </div>

  <div class="taskbar">
    <div class="weather">
      <svg width="22" height="20" viewBox="0 0 22 20" aria-hidden="true">
        <circle cx="14" cy="7" r="6" fill="#f49a2b" /><path d="M4 17q-4-1-3-5 1-3 4-3 2-4 6-3 4 0 5 4 4 1 4 4 0 3-4 3z" fill="#c3d4f6" />
      </svg>
      <div><p>17°C</p><p>Ciel couvert</p></div>
    </div>
    <div class="dock">
      <button type="button" class="app" aria-label="Démarrer">
        <svg width="20" height="20" viewBox="0 0 20 20" fill="#4cc0f5" aria-hidden="true"><path d="M0 0h9.500v9.500H0zM10.500 0H20v9.500h-9.500zM0 10.500h9.500V20H0zM10.500 10.500H20V20h-9.500z" /></svg>
      </button>
      <label class="search">
        {@render icon("search", 13)}
        <input type="search" placeholder="Search" aria-label="Search" />
        <svg width="42" height="24" viewBox="0 0 42 24" fill="none" aria-hidden="true">
          <path d="M3 12l13 2-2 5-11-2z" fill="#d1487c" /><path d="M8 16q8-13 18-7l8 10q-12 7-22 1z" fill="#3d9d55" /><path d="M17 12l9-8 6 2-5 9z" fill="#f3c13b" /><path d="M26 6q6-2 8 3l-5 5z" fill="#e04a39" /><circle cx="35" cy="17" r="4" fill="#f08bb4" /><path d="M13 8l4-4 3 4z" fill="#3e8be0" /><path d="M14 21h22" stroke="#f0a93b" stroke-width="2" />
        </svg>
      </label>
      <button type="button" class="app" aria-label="Vue des tâches">
        <svg width="20" height="20" viewBox="0 0 20 20" aria-hidden="true"><path d="M1 5h13v10H1z" fill="#737983" /><path d="M6 2h13v12H6z" fill="#f2f2f3" /></svg>
      </button>
      <button type="button" class="app" aria-label="Teams">
        <svg width="20" height="20" viewBox="0 0 20 20" aria-hidden="true"><circle cx="15" cy="5" r="3" fill="#7b83eb" /><circle cx="8" cy="4" r="3.500" fill="#8f96f0" /><path d="M4 8h14v7q-2 4-6 3-6 2-8-3z" fill="#5a62c8" /><path d="M1 6h10v10H1z" fill="#3f47ad" /><path d="M3 8.500h6M6 8.500V14" stroke="#fff" stroke-width="1.500" /></svg>
      </button>
      <button type="button" class="app running" aria-label="Explorateur">
        <svg width="22" height="20" viewBox="0 0 22 20" aria-hidden="true"><path d="M1 2h8l2 3h10v13H1z" fill="#e5a526" /><path d="M1 6h20v12H1z" fill="#ffd65c" /><path d="M5 14h12v5H5z" fill="#3c8fe0" /></svg>
      </button>
      <button type="button" class="app" aria-label="Edge">
        <svg width="20" height="20" viewBox="0 0 20 20" aria-hidden="true"><circle cx="10" cy="10" r="9.500" fill="#1e7fcf" /><path d="M1 9Q3 1 11 1t8.500 8q0 4-5 4-3-1-2-4-1-4-5-4-4 0-6.500 4z" fill="#4fd18b" /><path d="M7 11q0-4 4-4-4 6 7 7-3 6-9 5-4-2-2-8z" fill="#143f86" /></svg>
      </button>
      <button type="button" class="app" aria-label="Store">
        <svg width="20" height="20" viewBox="0 0 20 20" aria-hidden="true"><path d="M6 5V1h8v4" fill="none" stroke="#45b2ee" stroke-width="1.500" /><rect x="1" y="4" width="18" height="15" rx="2" fill="#f5f6f7" /><path d="M6 7h3.500v3.500H6z" fill="#f25022" /><path d="M10.500 7H14v3.500h-3.500z" fill="#7fba00" /><path d="M6 11.500h3.500V15H6z" fill="#00a4ef" /><path d="M10.500 11.500H14V15h-3.500z" fill="#ffb900" /></svg>
      </button>
      <button type="button" class="app" aria-label="Firefox">
        <svg width="20" height="20" viewBox="0 0 20 20" aria-hidden="true"><path d="M2 7q0-4 2-5l2 3q3-1 5-4 3 3 5 4 3 3 3 6a9 9 0 0 1-18 0z" fill="#ff8a1f" /><path d="M11 1q5 3 7 7 1 6-3 9 2-6-2-9z" fill="#ffd23c" /><circle cx="10" cy="11.500" r="4.500" fill="#8043d8" /><path d="M2 9q4-3 8-1-4 1-2 4 3 3 7 0-1 6-6 6-6-1-7-9z" fill="#f5393f" /></svg>
      </button>
      <button type="button" class="app running" aria-label="Telegram">
        <svg width="20" height="20" viewBox="0 0 20 20" aria-hidden="true"><circle cx="10" cy="10" r="9.500" fill="#34a5e0" /><path d="M3 10l12-5-2 11-4-3-2 2v-4z" fill="#fff" /></svg>
        <span class="badge">54</span>
      </button>
      {#each ["", "y"] as badge}
        <button type="button" class="app running" aria-label="Chrome {badge}">
          <svg width="20" height="20" viewBox="0 0 20 20" aria-hidden="true"><circle cx="10" cy="10" r="9.500" fill="#3fae49" /><path d="M1.800 5.200A9.500 9.500 0 0 1 18.500 6H10L6 12z" fill="#e5402f" /><path d="M18.700 6a9.500 9.500 0 0 1-9 13.500l4.300-7.500L10 6z" fill="#fbc91f" /><circle cx="10" cy="10" r="4.500" fill="#fff" /><circle cx="10" cy="10" r="3.500" fill="#3478e5" /></svg>
          <span class={["badge", badge ? "red" : "white-badge"]}>{badge}</span>
        </button>
      {/each}
      <button type="button" class="app current-app" aria-label="Civil 3D"><span class="c3d">C<small>C3D</small></span></button>
      <button type="button" class="app running" aria-label="Excel">
        <svg width="20" height="20" viewBox="0 0 20 20" aria-hidden="true"><path d="M5 1h14v18H5z" fill="#21a366" /><path d="M12 1h7v6h-7z" fill="#33c481" /><path d="M5 13h14v6H5z" fill="#185c37" /><path d="M0 5h11v11H0z" fill="#107c41" /><path d="M3 7.500l5 6M8 7.500l-5 6" stroke="#fff" stroke-width="1.500" /></svg>
      </button>
      <button type="button" class="app running" aria-label="Enregistreur">
        <svg width="20" height="20" viewBox="0 0 20 20" aria-hidden="true"><circle cx="10" cy="10" r="8.500" fill="#0a0a0a" stroke="#fff" stroke-width="1.500" /><circle cx="10" cy="10" r="5.500" fill="#ef2026" /></svg>
      </button>
    </div>
    <div class="tray">
      {@render icon("up", 12)}
      <svg width="16" height="14" viewBox="0 0 16 14" aria-hidden="true"><path d="M3 10q-4-3 1-5 2-4 5-1 4 0 4 4l-2 3z" fill="#b5bac3" /><circle cx="11" cy="9" r="4" fill="#e9ebee" /><path d="M9 11l4-4-2-2v8l2-2-4-4" fill="none" stroke="#2473c4" /></svg>
      <svg width="12" height="15" viewBox="0 0 12 15" fill="none" stroke="#c7cbd2" aria-hidden="true"><rect x="4" y="1" width="4" height="8" rx="2" /><path d="M2 7q0 4 4 4t4-4M6 11v3" stroke="#65b5e8" /></svg>
      <p class="lang">ENG<br />US</p>
      <svg class="net" width="54" height="14" viewBox="0 0 54 14" fill="none" stroke="#eceef1" aria-hidden="true">
        <path d="M1 5q6-6 12 0M3 8q4-4 8 0M5 10q2-2 4 0" stroke-width="1.300" /><circle cx="7" cy="12" r="1" fill="#eceef1" />
        <path d="M20 5h2l4-3v10l-4-3h-2zM28 5q2 2 0 4M30 3q3 4 0 8" />
        <path d="M41 4h11v8H41zM53 6v4" /><path d="M43 6h7v4h-7z" fill="#eceef1" /><path d="M40 1v5q3 2 5-1" />
      </svg>
      <p class="clock">3:16 PM<br />3/26/2024</p>
      <svg width="12" height="14" viewBox="0 0 12 14" aria-hidden="true"><path d="M1 10q1-1 1-5 0-4 4-4t4 4q0 4 1 5z" fill="#7fd0f7" /><path d="M4 11h4q0 2-2 2t-2-2z" fill="#7fd0f7" /></svg>
    </div>
  </div>
</div>

<style>
  :global(body) {
    margin: 0;
    background: #10162c;
  }

  .desktop {
    min-height: 100vh;
    display: flex;
    flex-direction: column;
    font-family: Roboto, "Noto Sans", sans-serif;
    font-size: 10px;
    line-height: 12px;
    color: #d9dce0;
  }

  .window {
    flex: 1;
    display: flex;
    flex-direction: column;
    margin: 0 2px 1px 1px;
    padding: 0 2px;
    box-sizing: border-box;
    background: #222933;
    border: 1px solid #1d7ea9;
    border-radius: 6px;
    overflow: hidden;
  }

  button,
  input,
  select {
    font: inherit;
    color: inherit;
    background: none;
    border: 0;
    padding: 0;
    margin: 0;
    white-space: nowrap;
  }

  input,
  select {
    min-width: 0;
    outline: none;
    appearance: none;
  }

  p {
    margin: 0;
  }

  .icon {
    flex: none;
    display: block;
  }

  .tool {
    flex: none;
    width: 19px;
    height: 18px;
    display: flex;
    align-items: center;
    justify-content: center;
  }

  .tool.narrow {
    width: 12px;
  }

  /* title bar */
  .titlebar {
    height: 26px;
    display: flex;
    align-items: center;
    padding-left: 9px;
  }

  .logo {
    width: 18px;
    height: 17px;
    background: linear-gradient(90deg, #d43c96 20%, #a8107e 20%);
    color: #fff;
    font-weight: 700;
    font-size: 11px;
  }

  .quick {
    display: flex;
    gap: 1px;
    padding: 0 3px;
  }

  .field {
    flex: 1;
    min-width: 0;
    height: 17px;
    display: flex;
    align-items: center;
    gap: 4px;
    padding: 0 2px;
    background: #465063;
  }

  .field.tall {
    flex: none;
    height: 18px;
    gap: 5px;
  }

  .workspace {
    flex: 0 0 144px;
    background: #3a4352;
    margin-left: 2px;
    gap: 2px;
  }

  .share,
  .login {
    display: flex;
    align-items: center;
    gap: 4px;
    color: #8ccaf2;
    margin-left: 4px;
  }

  .login {
    color: #e2e4e7;
    margin: 0 9px 0 2px;
  }

  h1 {
    flex: 1 1 0;
    font-size: 10px;
    font-weight: 400;
    margin: 0 0 0 16px;
    white-space: nowrap;
    overflow: hidden;
  }

  .find {
    width: 148px;
    height: 18px;
    background: #434c5e;
    margin: 0 1px 0 4px;
    padding: 0 2px;
    box-sizing: border-box;
  }

  .find::placeholder {
    color: #a9afb9;
    font-style: italic;
    opacity: 1;
  }

  .rule {
    width: 1px;
    height: 14px;
    background: #4c5461;
    margin: 0 6px 0 5px;
  }

  .winbtns {
    display: flex;
    gap: 20px;
    padding: 0 6px 0 58px;
  }

  /* menus and ribbon tabs */
  .menubar {
    height: 18px;
    display: flex;
    align-items: center;
    gap: 12px;
    padding: 1px 0 0 8px;
    box-sizing: border-box;
    color: #b2b7c0;
    border-bottom: 1px solid #39414e;
  }

  .covadis {
    display: flex;
    gap: 3px;
    margin-left: -4px;
  }

  .docbtns {
    display: flex;
    gap: 8px;
    margin-left: auto;
    padding-right: 4px;
  }

  .ribbon-tabs {
    display: flex;
    align-items: flex-end;
    height: 19px;
    color: #b8bdc5;
    padding-left: 3px;
  }

  .ribbon-tabs button {
    height: 16px;
    padding: 1px 8px 0;
  }

  .ribbon-tabs .active {
    background: #3b4453;
    color: #f0f1f3;
  }

  .toggle {
    display: flex;
    align-items: center;
    gap: 4px;
    height: 16px;
    padding-left: 15px;
  }

  /* ribbon */
  .ribbon {
    display: flex;
    background: #3b4453;
    height: 83px;
  }

  .panel {
    flex: 1 1 0;
    min-width: 0;
    display: flex;
    flex-direction: column;
    border-right: 1px solid #2b323d;
    box-sizing: border-box;
    overflow: hidden;
  }

  .draw {
    flex-grow: 195;
  }

  .modify {
    flex-grow: 240;
  }

  .layers {
    flex-grow: 235;
  }

  .annotate {
    flex-grow: 108;
  }

  .blocks {
    flex-grow: 67;
  }

  .props {
    flex-grow: 201;
  }

  .groups {
    flex-grow: 66;
  }

  .utils {
    flex-grow: 79;
  }

  .clip {
    flex-grow: 80;
    border-right: 0;
  }

  .body {
    flex: 1;
    display: flex;
    justify-content: space-between;
    padding: 5px 2px 0;
  }

  .annotate .body {
    padding: 5px 2px 0 4px;
  }

  .utils .body,
  .clip .body {
    padding: 5px 3px 0 9px;
  }

  .big {
    flex: none;
    display: flex;
    flex-direction: column;
    align-items: center;
    align-self: flex-start;
    min-width: 36px;
    line-height: 13px;
    padding-top: 1px;
  }

  .big svg + span {
    padding-top: 3px;
  }

  .stack {
    display: flex;
    flex-direction: column;
    gap: 2px;
  }

  .stack.wide {
    flex: 1;
    min-width: 0;
    padding-left: 3px;
  }

  .pair {
    display: flex;
    align-items: center;
    height: 18px;
  }

  .layers .pair .tool {
    width: 20px;
  }

  .props .pair {
    gap: 3px;
  }

  .pressed {
    background: #45617f;
    outline: 1px solid #6ba4d8;
    outline-offset: -1px;
  }

  .row {
    display: flex;
    align-items: center;
    gap: 4px;
    height: 18px;
  }

  .row span {
    padding-right: 4px;
  }

  .row.current-layer {
    padding-left: 3px;
  }

  .modify-grid {
    display: grid;
    grid-template-columns: 68px 67px 74px;
    row-gap: 2px;
    padding-left: 2px;
    align-content: start;
  }

  .foot {
    height: 16px;
    display: flex;
    align-items: center;
    justify-content: center;
    gap: 4px;
    color: #d0d4d9;
  }

  .swatch {
    flex: none;
    width: 11px;
    height: 11px;
    background: #ff0;
    border: 1px solid #9a9a2a;
  }

  .stroke {
    flex: 1 0 30px;
    height: 1px;
    background: #d6d9dd;
  }

  .combo {
    flex: 1;
    height: 15px;
    text-overflow: ellipsis;
  }

  .stroke + .combo {
    flex: 0 0 38px;
    text-overflow: clip;
  }

  .combo.dark {
    color: #e3e5e8;
  }

  .combo option {
    color: #111;
  }

  /* file tabs */
  .files {
    height: 25px;
    display: flex;
    align-items: center;
    gap: 8px;
    padding-left: 10px;
    color: #d2d5da;
  }

  .slash {
    width: 1px;
    height: 14px;
    background: #59616e;
    transform: skewX(-20deg);
    margin: 0 2px;
  }

  .padded {
    margin-right: 5px;
  }

  .current {
    height: 21px;
    display: flex;
    align-items: center;
    gap: 4px;
    padding: 0 4px 0 12px;
    background: #3b4453;
    clip-path: polygon(8px 0, 100% 0, calc(100% - 8px) 100%, 0 100%);
    color: #fff;
    font-weight: 700;
  }

  /* toolbars */
  .toolbar {
    height: 20px;
    display: flex;
    align-items: center;
    background: #3b4453;
    border-top: 1px solid #2b323d;
    padding-left: 2px;
    margin-top: 1px;
    box-sizing: border-box;
  }

  .toolbar.second {
    height: 21px;
    margin: 0;
    padding-bottom: 2px;
  }

  .group {
    display: flex;
    padding-right: 2px;
    border-right: 1px solid #2b323d;
    box-sizing: border-box;
  }

  .grip {
    flex: none;
    width: 6px;
    height: 12px;
    background: radial-gradient(circle, #c3c8ce 1px, transparent 1px) 0 0 / 3px 3px;
  }

  .grip.flat {
    width: 12px;
    height: 6px;
    margin: 1px 0;
  }

  .white {
    display: flex;
    align-items: center;
    gap: 5px;
    height: 18px;
    padding: 0 4px;
    margin-right: 2px;
    background: #fff;
    color: #222;
    box-sizing: border-box;
  }

  .toolbar.second .white {
    height: 16px;
  }

  .style {
    flex: 0 1 100px;
    padding-left: 16px;
  }

  .layer {
    flex: 0 1 248px;
  }

  .colour {
    flex: 0 1 126px;
  }

  .ltype {
    flex: 0 1 133px;
  }

  .lweight {
    flex: 0 1 104px;
  }

  .plot {
    flex: 0 1 100px;
    background: #f5f5f5;
    padding-left: 8px;
  }

  .white .stroke {
    background: #333;
  }

  .white .stroke.bold {
    height: 2px;
    flex-basis: 28px;
  }

  .white .stroke + .combo {
    flex-basis: 54px;
  }

  .combo:disabled {
    color: #999;
    opacity: 1;
  }

  /* work area */
  .work {
    flex: 1;
    display: flex;
    background: #212830;
    min-height: 400px;
  }

  .side {
    display: flex;
    gap: 2px;
    background: #3b4453;
    padding: 2px 1px 0 0;
    align-items: stretch;
  }

  .column {
    display: flex;
    flex-direction: column;
    align-items: center;
    width: 21px;
    border-right: 1px solid #2b323d;
    box-sizing: border-box;
  }

  .column .tool {
    flex: 1 1 18px;
  }

  .draw-tools {
    margin-bottom: 60px;
  }

  .edit-tools {
    margin-bottom: 97px;
  }

  .canvas {
    flex: 1;
    min-width: 0;
    position: relative;
    overflow: hidden;
  }

  .drawing {
    position: absolute;
    inset: 0;
    width: 100%;
    height: 100%;
  }

  .anno {
    font: italic 700 4px "Liberation Serif", serif;
    fill: #fff;
  }

  .anno.large {
    font-size: 5px;
  }

  .tiny {
    font: italic 700 4px "Liberation Sans", sans-serif;
    fill: #e6e6e6;
  }

  .dims {
    font: 700 5px "Liberation Serif", serif;
    fill: #dd2be6;
  }

  .title {
    font: italic 10px "DejaVu Serif", serif;
    fill: #fff;
  }

  .subtitle {
    font: italic 7px "DejaVu Serif", serif;
    fill: #fff;
  }

  .nota {
    font: 5px "DejaVu Sans", "Liberation Sans", sans-serif;
    fill: #fff;
    white-space: pre;
  }

  .view-label {
    position: absolute;
    left: 1px;
    top: 5px;
    color: #dfe2e5;
  }

  .cube {
    position: absolute;
    top: 10px;
    right: 9px;
    width: 82px;
    height: 84px;
    display: grid;
    grid-template: 14px 1fr 14px / 12px 1fr 12px;
    place-items: center;
    font: 700 12px/12px "Noto Sans", sans-serif;
    color: #b7babd;
  }

  .cube::before {
    content: "";
    position: absolute;
    left: 4px;
    top: 5px;
    width: 60px;
    height: 60px;
    border: 7px solid #42474f;
    border-radius: 50%;
  }

  .cube b,
  .cube button {
    position: relative;
  }

  .cube .n,
  .cube .s {
    grid-column: 1 / 4;
  }

  .cube button {
    width: 32px;
    height: 32px;
    background: #b9babb;
    color: #4a4f57;
    font: 700 8px/10px Roboto, sans-serif;
  }

  .ucs {
    position: absolute;
    top: 105px;
    right: 30px;
    width: 38px;
    height: 14px;
    display: flex;
    align-items: center;
    gap: 4px;
    padding-left: 4px;
    border-radius: 3px;
    background: #8e909b;
    color: #d6d8dc;
    font-size: 9px;
  }

  .navbar {
    position: absolute;
    top: 136px;
    right: 0;
    height: 170px;
    background: #686b70;
  }

  .command {
    position: absolute;
    left: 196px;
    right: 195px;
    bottom: 1px;
    height: 21px;
    display: flex;
    align-items: center;
    background: #2b323d;
    padding-left: 3px;
  }

  .entry {
    flex: 1;
    height: 21px;
    display: flex;
    align-items: center;
    gap: 3px;
    padding: 0 4px;
    margin-left: 1px;
    background: #fff;
    color: #111;
  }

  .entry input {
    flex: 1;
    caret-color: #111;
  }

  .down,
  .rise {
    border: 3px solid transparent;
    border-top: 4px solid #555;
    border-bottom: 0;
  }

  .rise {
    border-top: 0;
    border-bottom: 4px solid #555;
  }

  .cursor {
    width: 1px;
    height: 13px;
    background: #222;
  }

  /* status bar */
  .statusbar {
    height: 25px;
    display: flex;
    align-items: center;
    gap: 6px;
    padding: 0 1px 1px 10px;
    border-top: 3px solid #3b4453;
  }

  .model {
    height: 20px;
    padding: 0 13px;
    background: #3b4453;
    clip-path: polygon(8px 0, 100% 0, calc(100% - 8px) 100%, 0 100%);
    color: #fff;
    font-weight: 700;
    font-size: 11px;
  }

  .modes {
    margin-left: auto;
    display: flex;
    gap: 1px;
  }

  .cell {
    height: 20px;
    display: flex;
    align-items: center;
    background: #343c49;
    gap: 3px;
  }

  .cell.thin .tool {
    width: 14px;
  }

  .cell.word {
    padding: 0 3px;
  }

  .cell.count {
    padding: 0 5px;
    gap: 8px;
  }

  .cell.sync {
    padding: 0 2px;
  }

  .cell.on {
    background: #5d8fc6;
  }

  /* taskbar */
  .taskbar {
    height: 40px;
    display: grid;
    grid-template-columns: 1fr auto 1fr;
    align-items: center;
    background: linear-gradient(90deg, #1c1f28 0, #1b1f2c 16%, #12205a 24%, #13205a 60%, #1b1d2b 72%, #1b1d28 100%);
    color: #eceef1;
  }

  .weather {
    display: flex;
    align-items: center;
    gap: 5px;
    padding-left: 15px;
    line-height: 13px;
  }

  .dock {
    display: flex;
    align-items: center;
    gap: 5px;
    margin-right: 26px;
  }

  .app {
    position: relative;
    width: 31px;
    height: 32px;
    display: flex;
    align-items: center;
    justify-content: center;
  }

  .search {
    width: 184px;
    height: 26px;
    margin: 0;
    box-sizing: border-box;
    display: flex;
    align-items: center;
    gap: 8px;
    padding: 0 6px 0 10px;
    border: 1px solid #46517c;
    border-radius: 13px;
    background: #323e6b;
    font-size: 11px;
  }

  .search input {
    flex: 1;
  }

  .search input::placeholder {
    color: #d5d9e6;
    opacity: 1;
  }

  .running::after,
  .current-app::after {
    content: "";
    position: absolute;
    bottom: 0;
    left: 13px;
    width: 5px;
    height: 2px;
    border-radius: 1px;
    background: #8f95a6;
  }

  .current-app {
    background: #33375c;
    border-radius: 4px;
  }

  .current-app::after {
    left: 9px;
    width: 13px;
    background: #5bc2f5;
  }

  .badge {
    position: absolute;
    top: 2px;
    right: 1px;
    width: 13px;
    height: 12px;
    border-radius: 6px;
    background: #8d939c;
    color: #fff;
    font-size: 9px;
    line-height: 12px;
  }

  .badge.red {
    background: #c23a20;
  }

  .badge.white-badge {
    background: #dfe0e2;
    width: 10px;
  }

  .c3d {
    width: 17px;
    height: 19px;
    display: flex;
    flex-direction: column;
    background: #b0127e;
    color: #fff;
    font-weight: 700;
    font-size: 11px;
    line-height: 12px;
  }

  .c3d small {
    font-size: 5px;
    line-height: 6px;
  }

  .tray {
    justify-self: end;
    display: flex;
    align-items: center;
    gap: 14px;
    padding-right: 17px;
  }

  .lang {
    text-align: center;
  }

  .clock {
    text-align: right;
    margin-right: -6px;
  }

  .lang,
  .clock {
    line-height: 13px;
  }
</style>
